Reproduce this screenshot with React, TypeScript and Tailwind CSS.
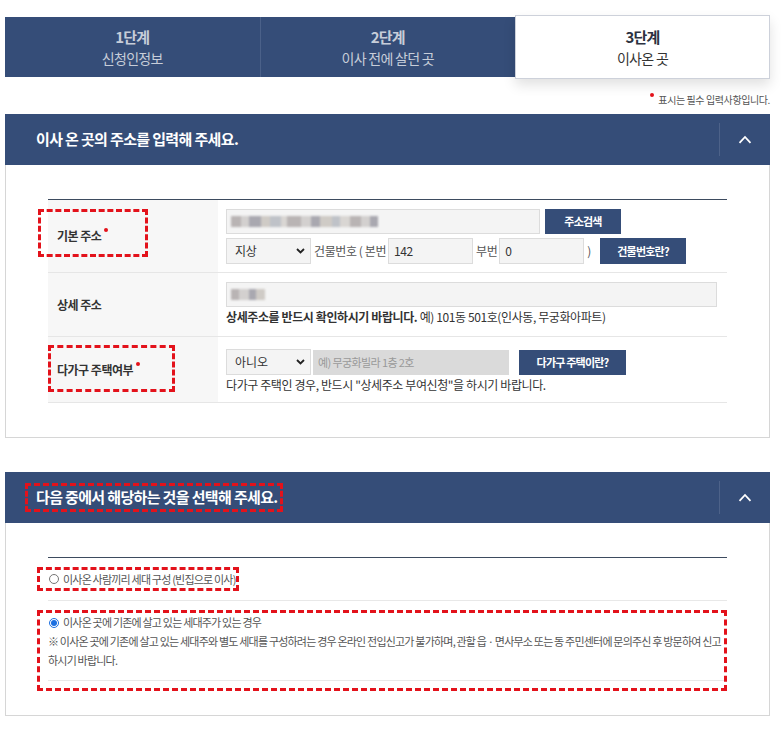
import React from "react";

// step tab
function Step({ no, label, active }: { no: string; label: string; active?: boolean }) {
  if (active) {
    return (
      <div className="w-[255px] h-[64px] bg-white border border-[#cdd1da] shadow-[0_6px_12px_rgba(0,0,0,0.12)] flex flex-col items-center justify-center">
        <div className="text-[15px] font-bold leading-[21px] tracking-[-0.8px] text-[#2b3240]">{no}</div>
        <div className="mt-[1px] text-[14px] leading-[21px] tracking-[-0.7px] text-[#333]">{label}</div>
      </div>
    );
  }
  return (
    <div className="flex-1 h-[60px] bg-[#354d78] flex flex-col items-center justify-center">
      <div className="text-[15px] font-bold leading-[21px] tracking-[-0.8px] text-[#c7cdd9]">{no}</div>
      <div className="mt-[1px] text-[14px] leading-[21px] tracking-[-0.7px] text-[#c7cdd9]">{label}</div>
    </div>
  );
}

function ChevronUp() {
  return (
    <svg width="14" height="9" viewBox="0 0 14 9" fill="none">
      <polyline points="1.5,7.8 7,2 12.5,7.8" stroke="white" strokeWidth="1.8" />
    </svg>
  );
}

function RedBox({ className }: { className: string }) {
  return <div className={`absolute border-[3px] border-dashed border-[#e3121b] pointer-events-none ${className}`} />;
}

function SectionHeader({ title, boxed }: { title: string; boxed?: boolean }) {
  return (
    <div className="h-[51px] bg-[#354d78] flex items-center">
      <div className="relative pl-[31px] text-[15px] font-bold tracking-[-0.65px] text-white">
        {title}
        {boxed && <RedBox className="left-[20px] -right-[5px] -top-[3px] -bottom-[3px]" />}
      </div>
      <div className="ml-auto h-[33px] border-l border-[#4d6289]" />
      <div className="w-[50px] flex items-center justify-center">
        <ChevronUp />
      </div>
    </div>
  );
}

function Dot() {
  return <span className="inline-block w-[4px] h-[4px] rounded-full bg-[#e3121b] ml-[3px] -translate-y-[6px]" />;
}

function SelectBox({ value }: { value: string }) {
  return (
    <div className="w-[85px] h-[26px] border border-[#dcdcdc] bg-[#f4f4f4] flex items-center pl-[8px] pr-[5px] text-[12px] text-[#333]">
      {value}
      <svg className="ml-auto" width="9" height="6" viewBox="0 0 9 6" fill="none">
        <polyline points="1,1 4.5,4.5 8,1" stroke="#222" strokeWidth="1.8" />
      </svg>
    </div>
  );
}

function NavyBtn({ children, className }: { children: React.ReactNode; className: string }) {
  return (
    <div className={`h-[25px] bg-[#354d78] text-white text-[11px] font-bold tracking-[-0.8px] flex items-center justify-center ${className}`}>
      {children}
    </div>
  );
}

// blurred personal data
function Blur({ widths }: { widths: number[] }) {
  const tones = ["#b9b4b4", "#d3d0cf", "#a9a8b0", "#cfcbc6", "#bfc2c8", "#d9d6d3"];
  return (
    <div className="flex h-[11px] blur-[1px]">
      {widths.map((w, i) => (
        <div key={i} style={{ width: w, background: tones[i % tones.length] }} />
      ))}
    </div>
  );
}

export default function App() {
  return (
    <div className="min-h-[743px] bg-white font-['Noto_Sans_CJK_KR',sans-serif] text-[#333]">
      <div className="w-[765px] ml-[5px] pt-[15px]">
        {/* STEPS */}
        <div className="flex items-center">
          <div className="flex flex-1 divide-x divide-[#4b6189]">
            <Step no="1단계" label="신청인정보" />
            <Step no="2단계" label="이사 전에 살던 곳" />
          </div>
          <Step no="3단계" label="이사온 곳" active />
        </div>

        {/* REQUIRED NOTE */}
        <div className="flex justify-end items-center mt-[13px] h-[14px] text-[10px] tracking-[-0.4px] text-[#555]">
          <span className="w-[4px] h-[4px] rounded-full bg-[#e3121b] mr-[4px] -translate-y-[4px]" />
          표시는 필수 입력사항입니다.
        </div>

        {/* SECTION 1 */}
        <div className="mt-[8px]">
          <SectionHeader title="이사 온 곳의 주소를 입력해 주세요." />
          <div className="border border-t-0 border-[#d6d6d6] pt-[34px] pb-[34px] pl-[42px] pr-[42px]">
            <div className="border-t border-[#3d4b5f]">
              {/* row 1 */}
              <div className="relative grid grid-cols-[170px_1fr] border-b border-[#e6e6e6]">
                <div className="bg-[#f7f7f7] pl-[9px] flex items-center text-[12px] font-bold tracking-[-0.5px]">
                  기본 주소<Dot />
                </div>
                <div className="pl-[8px] pt-[9px] pb-[8px]">
                  <div className="flex items-center gap-[5px]">
                    <div className="w-[314px] h-[25px] border border-[#dcdcdc] bg-[#f4f4f4] flex items-center pl-[4px]">
                      <Blur widths={[10, 8, 12, 9, 11, 6, 14, 10, 9, 12, 8, 10, 11, 9, 8]} />
                    </div>
                    <NavyBtn className="w-[76px]">주소검색</NavyBtn>
                  </div>
                  <div className="flex items-center mt-[4px] text-[12px] tracking-[-0.4px] text-[#555]">
                    <SelectBox value="지상" />
                    <span className="ml-[3px] mr-[2px]">건물번호 ( 본번</span>
                    <div className="w-[85px] h-[26px] border border-[#dcdcdc] bg-[#f4f4f4] flex items-center pl-[5px] text-[#333]">142</div>
                    <span className="ml-[3px] mr-[2px]">부번</span>
                    <div className="w-[85px] h-[26px] border border-[#dcdcdc] bg-[#f4f4f4] flex items-center pl-[5px] text-[#333]">0</div>
                    <span className="ml-[3px]">)</span>
                    <NavyBtn className="w-[86px] h-[26px] ml-[9px]">건물번호란?</NavyBtn>
                  </div>
                </div>
                <RedBox className="left-[-10px] top-[9px] w-[110px] h-[48px]" />
              </div>

              {/* row 2 */}
              <div className="grid grid-cols-[170px_1fr] border-b border-[#e6e6e6]">
                <div className="bg-[#f7f7f7] pl-[9px] flex items-center text-[12px] font-bold tracking-[-0.5px]">상세 주소</div>
                <div className="pl-[8px] pt-[9px] pb-[10px]">
                  <div className="w-[491px] h-[25px] border border-[#dcdcdc] bg-[#f4f4f4] flex items-center pl-[4px]">
                    <Blur widths={[8, 10, 7, 9]} />
                  </div>
                  <div className="mt-[1px] text-[12px] leading-[18px] tracking-[-0.4px]">
                    <b>상세주소를 반드시 확인하시기 바랍니다.</b> 예) 101동 501호(인사동, 무궁화아파트)
                  </div>
                </div>
              </div>

              {/* row 3 */}
              <div className="relative grid grid-cols-[170px_1fr] border-b border-[#e6e6e6]">
                <div className="bg-[#f7f7f7] pl-[9px] flex items-center text-[12px] font-bold tracking-[-0.5px]">
                  다가구 주택여부<Dot />
                </div>
                <div className="pl-[8px] pt-[12px] pb-[8px]">
                  <div className="flex items-center">
                    <SelectBox value="아니오" />
                    <div className="w-[196px] h-[25px] ml-[2px] bg-[#dadada] flex items-center pl-[5px] text-[11px] tracking-[-0.6px] text-[#999]">
                      예) 무궁화빌라 1층 2호
                    </div>
                    <NavyBtn className="w-[107px] ml-[10px]">다가구 주택이란?</NavyBtn>
                  </div>
                  <div className="mt-[1px] text-[12px] leading-[18px] tracking-[-0.4px]">
                    다가구 주택인 경우, 반드시 "상세주소 부여신청"을 하시기 바랍니다.
                  </div>
                </div>
                <RedBox className="left-0 top-[8px] w-[127px] h-[47px]" />
              </div>
            </div>
          </div>
        </div>

        {/* SECTION 2 */}
        <div className="mt-[34px]">
          <SectionHeader title="다음 중에서 해당하는 것을 선택해 주세요." boxed />
          <div className="border border-t-0 border-[#d6d6d6] pt-[34px] pb-[34px] pl-[42px] pr-[42px]">
            <div className="border-t border-[#3d4b5f]">
              <div className="relative h-[43px] border-b border-[#e8e8e8] flex items-center text-[11px] tracking-[-0.8px] text-[#555]">
                <input type="radio" readOnly className="w-[10px] h-[10px] m-0 ml-[1px] mr-[4px]" />
                이사온 사람끼리 세대 구성 (빈집으로 이사)
                <RedBox className="left-[-11px] top-[9px] w-[202px] h-[24px]" />
              </div>
              <div className="relative mt-[9px] pt-[3px] border-b border-[#e8e8e8] pb-[10px] text-[11px] leading-[19px] tracking-[-0.8px] text-[#555]">
                <div className="flex items-center">
                  <input type="radio" checked readOnly className="w-[10px] h-[10px] m-0 ml-[1px] mr-[4px] accent-[#1b6fe0]" />
                  이사온 곳에 기존에 살고 있는 세대주가 있는 경우
                </div>
                <div>
                  ※ 이사온 곳에 기존에 살고 있는 세대주와 별도 세대를 구성하려는 경우 온라인 전입신고가 불가하며, 관할 읍 · 면사무소 또는 동 주민센터에 문의주신 후 방문하여 신고
                  <br />
                  하시기 바랍니다.
                </div>
                <RedBox className="left-[-11px] top-0 -right-0 h-[81px]" />
              </div>
            </div>
          </div>
        </div>
      </div>
    </div>
  );
}
